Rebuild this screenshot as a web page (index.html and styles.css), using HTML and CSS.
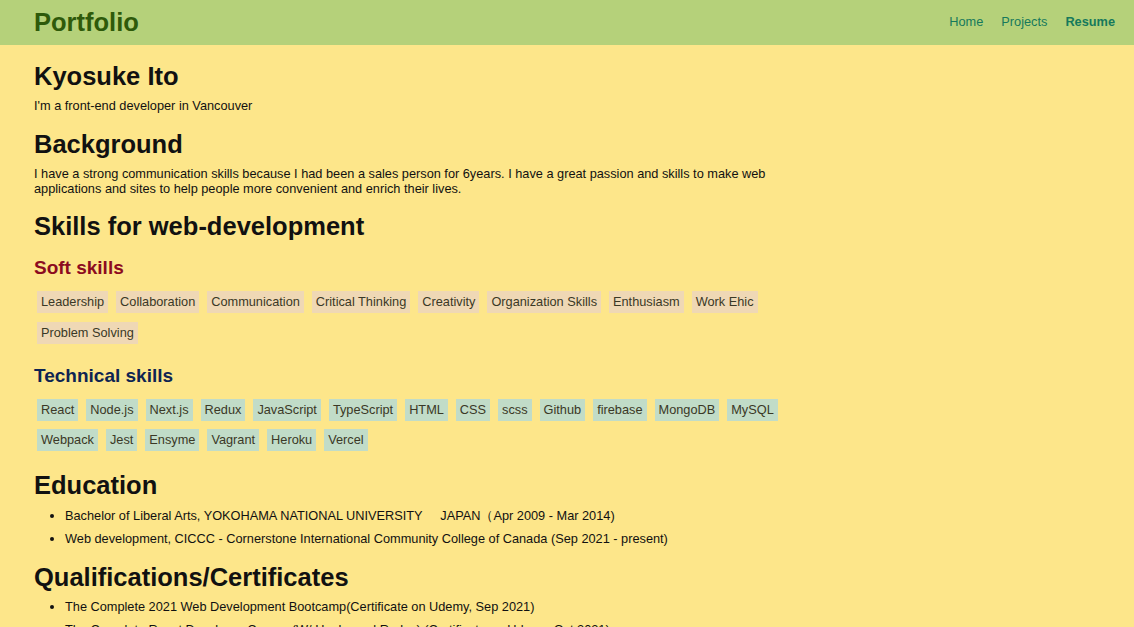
FILE: index.html
```html
<!DOCTYPE html>
<html lang="en">
<head>
<meta charset="utf-8">
<title>Portfolio</title>
<link rel="stylesheet" href="styles.css">
</head>
<body>
<header class="topbar">
  <div class="brand">Portfolio</div>
  <nav class="nav">
    <a href="#" class="nav-link">Home</a>
    <a href="#" class="nav-link">Projects</a>
    <a href="#" class="nav-link active">Resume</a>
  </nav>
</header>
<main class="content">
  <h1 class="title">Kyosuke Ito</h1>
  <p class="tagline">I'm a front-end developer in Vancouver</p>

  <h2 class="section-title">Background</h2>
  <p class="text">I have a strong communication skills because I had been a sales person for 6years. I have a great passion and skills to make web applications and sites to help people more convenient and enrich their lives.</p>

  <h2 class="section-title skills">Skills for web-development</h2>
  <h3 class="sub-title soft">Soft skills</h3>
  <ul class="tags">
    <li class="tag tag-soft">Leadership</li>
    <li class="tag tag-soft">Collaboration</li>
    <li class="tag tag-soft">Communication</li>
    <li class="tag tag-soft">Critical Thinking</li>
    <li class="tag tag-soft">Creativity</li>
    <li class="tag tag-soft">Organization Skills</li>
    <li class="tag tag-soft">Enthusiasm</li>
    <li class="tag tag-soft">Work Ehic</li>
    <li class="tag tag-soft">Problem Solving</li>
  </ul>
  <h3 class="sub-title tech">Technical skills</h3>
  <ul class="tags">
    <li class="tag tag-tech">React</li>
    <li class="tag tag-tech">Node.js</li>
    <li class="tag tag-tech">Next.js</li>
    <li class="tag tag-tech">Redux</li>
    <li class="tag tag-tech">JavaScript</li>
    <li class="tag tag-tech">TypeScript</li>
    <li class="tag tag-tech">HTML</li>
    <li class="tag tag-tech">CSS</li>
    <li class="tag tag-tech">scss</li>
    <li class="tag tag-tech">Github</li>
    <li class="tag tag-tech">firebase</li>
    <li class="tag tag-tech">MongoDB</li>
    <li class="tag tag-tech">MySQL</li>
    <li class="tag tag-tech">Webpack</li>
    <li class="tag tag-tech">Jest</li>
    <li class="tag tag-tech">Ensyme</li>
    <li class="tag tag-tech">Vagrant</li>
    <li class="tag tag-tech">Heroku</li>
    <li class="tag tag-tech">Vercel</li>
  </ul>

  <h2 class="section-title edu">Education</h2>
  <ul class="list">
    <li>Bachelor of Liberal Arts, YOKOHAMA NATIONAL UNIVERSITY&nbsp;&nbsp;&nbsp;&nbsp; JAPAN（Apr 2009 - Mar 2014)</li>
    <li>Web development, CICCC - Cornerstone International Community College of Canada (Sep 2021 - present)</li>
  </ul>

  <h2 class="section-title">Qualifications/Certificates</h2>
  <ul class="list">
    <li>The Complete 2021 Web Development Bootcamp(Certificate on Udemy, Sep 2021)</li>
    <li>The Complete React Developer Course (W/ Hooks and Redux) (Certificate on Udemy, Oct 2021)</li>
  </ul>
</main>
</body>
</html>
```

FILE: styles.css
```css
* { box-sizing: border-box; }

html, body {
  margin: 0;
  padding: 0;
}

body {
  background: #fde68a;
  font-family: "Liberation Sans", Arial, sans-serif;
  color: #111;
  font-size: 12.75px;
}

.topbar {
  height: 45px;
  background: #b5d17a;
  display: flex;
  align-items: center;
  justify-content: space-between;
  padding: 0 19px 0 34px;
}

.brand {
  font-size: 25.5px;
  font-weight: bold;
  color: #2e5a0a;
  line-height: 30px;
  margin-top: -2px;
}

.nav {
  display: flex;
  gap: 18px;
  margin-top: -2px;
}

.nav-link {
  color: #16795c;
  text-decoration: none;
  font-size: 12.75px;
  line-height: 15px;
}

.nav-link.active {
  font-weight: bold;
}

.content {
  padding: 0 34px;
  max-width: 822px;
  display: flex;
  flex-direction: column;
}

.title {
  font-size: 25.5px;
  line-height: 30px;
  margin: 16px 0 0;
  color: #111;
}

.tagline {
  margin: 7px 0 0;
  line-height: 15px;
}

.section-title {
  font-size: 25.5px;
  line-height: 30px;
  margin: 16px 0 0;
  color: #111;
}

.section-title.skills {
  margin-top: 15px;
}

.section-title.edu {
  margin-top: 19px;
}

.text {
  margin: 7px 0 0;
  line-height: 15px;
}

.sub-title {
  font-size: 19px;
  line-height: 22px;
  margin: 16px 0 0;
}

.sub-title.soft {
  color: #8c0b20;
}

.sub-title.tech {
  color: #0e2452;
  margin-top: 21px;
}

.tags {
  list-style: none;
  margin: 12px 0 0;
  padding: 0 0 0 3px;
  display: flex;
  flex-wrap: wrap;
  column-gap: 8px;
  row-gap: 8.5px;
}

.tag {
  height: 22px;
  line-height: 22px;
  padding: 0 4px;
  font-size: 12.75px;
  color: #3a3826;
}

.tag-soft {
  background: #efd8b5;
}

.tag-tech {
  background: #c1dcc8;
}

.list {
  margin: 7.5px 0 0;
  padding: 0 0 0 31px;
}

.list li {
  line-height: 15px;
}

.list li + li {
  margin-top: 8px;
}
```
